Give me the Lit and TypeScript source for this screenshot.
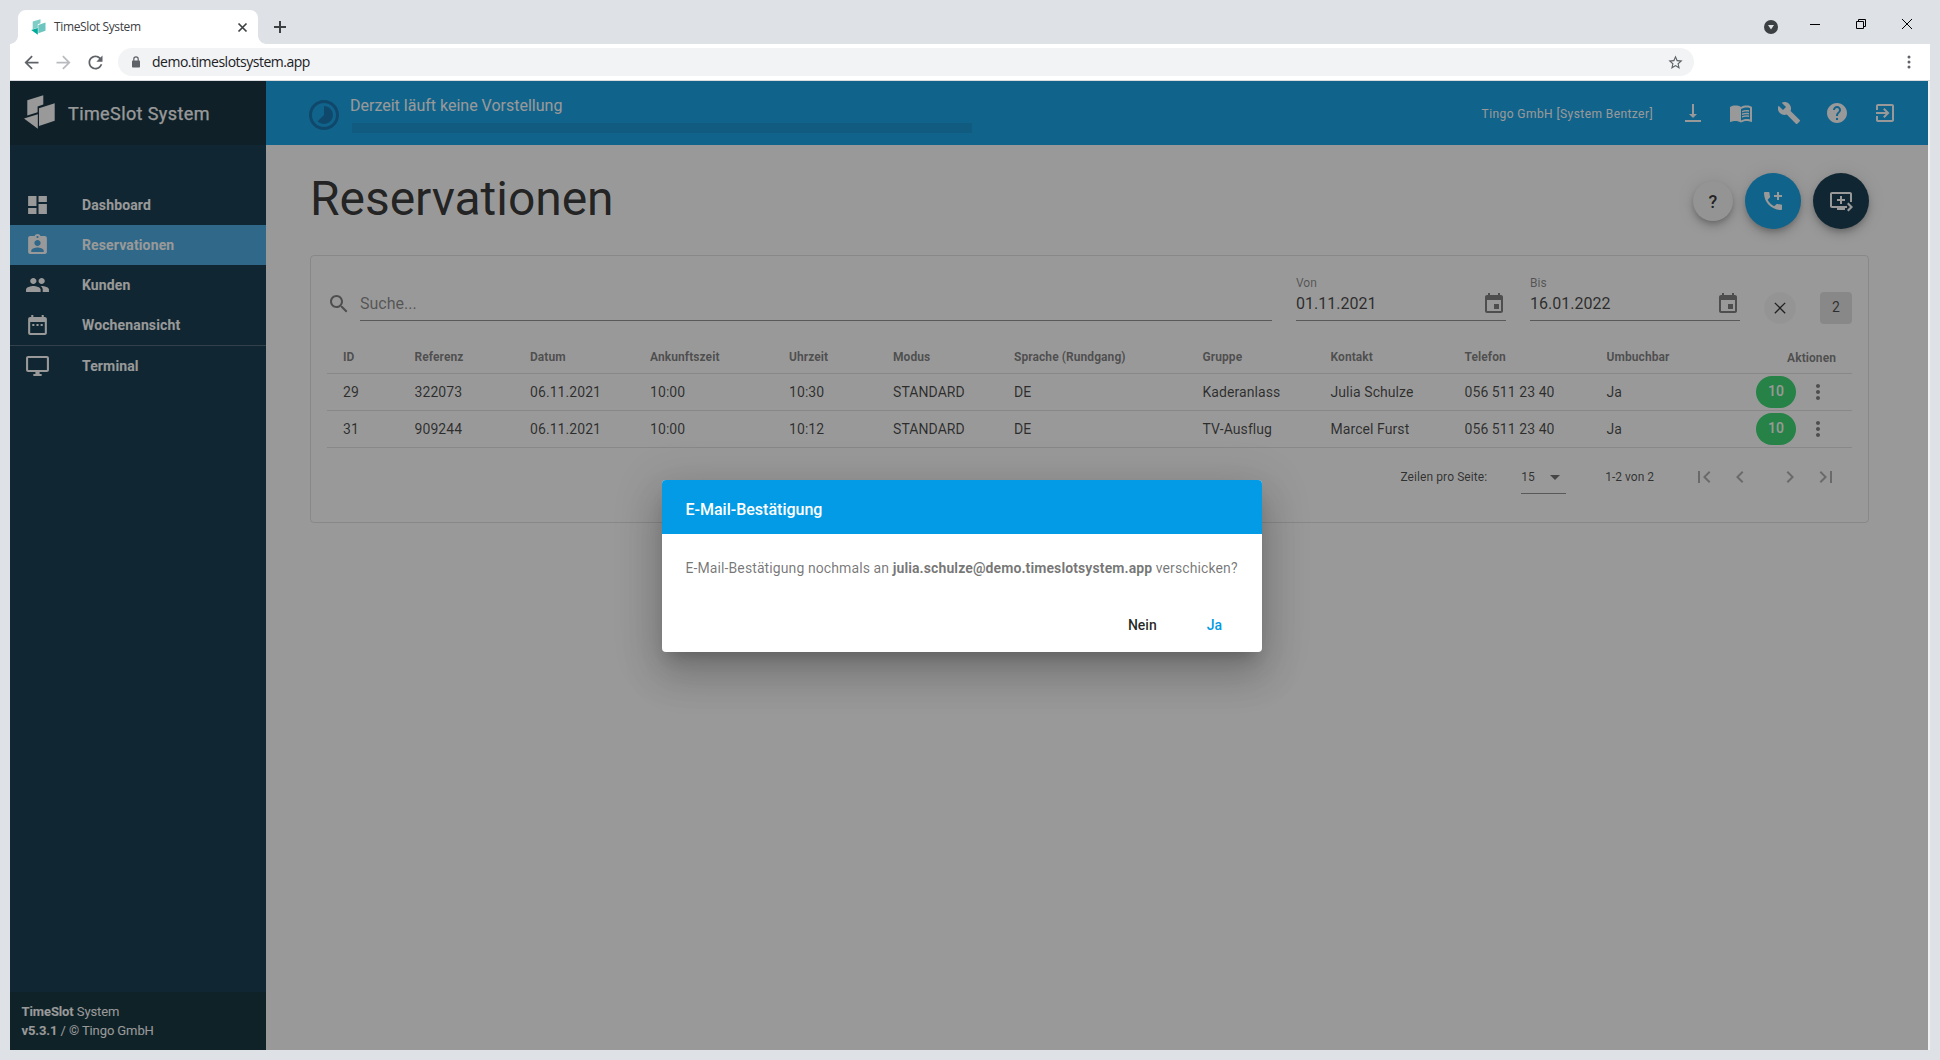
import { LitElement, html, css, svg } from "lit";
import { customElement, property } from "lit/decorators.js";

const ICONS: Record<string, string> = {
  dashboard: "M13 3v6h8V3m-8 18h8V11h-8M3 21h8v-6H3m0-2h8V3H3v10z",
  badge:
    "M19 3h-4.18C14.4 1.84 13.3 1 12 1s-2.4.84-2.82 2H5c-1.1 0-2 .9-2 2v14c0 1.1.9 2 2 2h14c1.1 0 2-.9 2-2V5c0-1.1-.9-2-2-2zm-7 0c.55 0 1 .45 1 1s-.45 1-1 1-1-.45-1-1 .45-1 1-1zm0 4c1.66 0 3 1.34 3 3s-1.34 3-3 3-3-1.34-3-3 1.34-3 3-3zm6 12H6v-1.4c0-2 4-3.1 6-3.1s6 1.1 6 3.1V19z",
  people:
    "M16 11c1.66 0 2.99-1.34 2.99-3S17.66 5 16 5s-3 1.34-3 3 1.34 3 3 3zm-8 0c1.66 0 2.99-1.34 2.99-3S9.66 5 8 5 5 6.340 5 8s1.340 3 3 3zm0 2c-2.330 0-7 1.170-7 3.500V19h14v-2.500c0-2.330-4.670-3.500-7-3.500zm8 0c-.290 0-.620.020-.970.050 1.160.840 1.970 1.970 1.970 3.450V19h6v-2.500c0-2.330-4.670-3.500-7-3.500z",
  week: "M9 11H7v2h2v-2zm4 0h-2v2h2v-2zm4 0h-2v2h2v-2zm2-7h-1V2h-2v2H8V2H6v2H5c-1.110 0-1.990.9-1.990 2L3 20c0 1.100.890 2 2 2h14c1.100 0 2-.9 2-2V6c0-1.100-.9-2-2-2zm0 16H5V9h14v11z",
  monitor:
    "M21 2H3c-1.100 0-2 .9-2 2v12c0 1.100.9 2 2 2h7v2H8v2h8v-2h-2v-2h7c1.100 0 2-.9 2-2V4c0-1.100-.9-2-2-2zm0 14H3V4h18v12z",
  timelapse:
    "M16.240 7.760C15.070 6.590 13.540 6 12 6v6l-4.240 4.240c2.340 2.340 6.140 2.340 8.490 0 2.340-2.340 2.340-6.140-.010-8.480zM12 2C6.480 2 2 6.480 2 12s4.480 10 10 10 10-4.480 10-10S17.520 2 12 2zm0 18c-4.420 0-8-3.580-8-8s3.580-8 8-8 8 3.580 8 8-3.580 8-8 8z",
  download: "M8 13h3V3h2v10h3l-4 4-4-4zM4 19v2h16v-2H4z",
  book: "M12 21.500c-1.350-.850-3.800-1.500-5.500-1.500-1.650 0-3.350.3-4.750 1.050-.1.050-.150.050-.250.050-.250 0-.5-.250-.5-.5V6c.6-.450 1.250-.750 2-1 1.110-.350 2.330-.5 3.500-.5 1.950 0 4.050.4 5.500 1.500 1.450-1.100 3.550-1.500 5.500-1.500 1.170 0 2.390.150 3.500.5.750.250 1.400.550 2 1v14.600c0 .250-.250.5-.5.5-.1 0-.150 0-.250-.050-1.400-.750-3.100-1.050-4.750-1.050-1.700 0-4.150.650-5.500 1.500M12 8v11.500c1.350-.850 3.800-1.500 5.500-1.500 1.200 0 2.400.150 3.500.5V7c-1.100-.350-2.300-.5-3.500-.5-1.700 0-4.150.650-5.500 1.500m1 3.500c1.110-.680 2.600-1 4.500-1 .910 0 1.760.090 2.500.280V9.230c-.870-.150-1.710-.230-2.500-.230-1.870 0-3.370.320-4.500.950v1.550m4.500.170c-1.710 0-3.210.260-4.500.790v1.690c1.110-.650 2.600-.990 4.500-.990 1.040 0 1.880.080 2.500.240v-1.500c-.870-.160-1.710-.230-2.500-.230m2.500 2.900c-.870-.160-1.710-.240-2.500-.240-1.830 0-3.330.270-4.500.8v1.690c1.110-.660 2.600-.990 4.500-.990 1.040 0 1.880.080 2.500.240v-1.500z",
  wrench:
    "M22.700 19l-9.100-9.100c.9-2.300.4-5-1.500-6.900-2-2-5-2.400-7.400-1.300L9 6 6 9 1.600 4.700C.4 7.100.9 10.100 2.900 12.100c1.900 1.900 4.600 2.400 6.900 1.500l9.100 9.100c.4.4 1 .4 1.400 0l2.300-2.300c.5-.4.5-1.100.1-1.400z",
  help: "M12 2C6.480 2 2 6.480 2 12s4.480 10 10 10 10-4.480 10-10S17.520 2 12 2zm1 17h-2v-2h2v2zm2.070-7.750l-.9.920C13.450 12.900 13 13.500 13 15h-2v-.5c0-1.100.450-2.100 1.170-2.830l1.240-1.260c.370-.360.590-.860.590-1.410 0-1.100-.9-2-2-2s-2 .9-2 2H8c0-2.210 1.790-4 4-4s4 1.790 4 4c0 .880-.360 1.680-.930 2.250z",
  exit: "M10.090 15.590L11.500 17l5-5-5-5-1.410 1.410L12.670 11H3v2h9.670l-2.580 2.590zM19 3H5c-1.110 0-2 .9-2 2v4h2V5h14v14H5v-4H3v4c0 1.100.890 2 2 2h14c1.100 0 2-.9 2-2V5c0-1.100-.9-2-2-2z",
  phonePlus:
    "M20 15.500c-1.250 0-2.450-.2-3.570-.57-.35-.11-.74-.03-1.020.24l-2.200 2.200c-2.830-1.440-5.150-3.750-6.590-6.590l2.200-2.200c.280-.280.360-.670.250-1.020C8.700 6.450 8.500 5.250 8.500 4c0-.550-.450-1-1-1H4c-.550 0-1 .450-1 1 0 9.390 7.610 17 17 17 .550 0 1-.450 1-1v-3.500c0-.550-.450-1-1-1zM21 6h-3V3h-2v3h-3v2h3v3h2V8h3V6z",
  queue:
    "M21 3H3c-1.110 0-2 .890-2 2v12c0 1.100.890 2 2 2h5v2h8v-2h2v-2H3V5h18v8h2V5c0-1.110-.9-2-2-2zm-8 7V7h-2v3H8v2h3v3h2v-3h3v-2h-3zm11 8l-4.500 4.500L18 21l3-3-3-3 1.500-1.500L24 18z",
  search:
    "M15.500 14h-.790l-.280-.270C15.410 12.590 16 11.110 16 9.500 16 5.910 13.090 3 9.500 3S3 5.910 3 9.500 5.910 16 9.500 16c1.610 0 3.090-.590 4.230-1.570l.270.280v.790l5 4.990L20.490 19l-4.990-5zm-6 0C7.010 14 5 11.990 5 9.500S7.010 5 9.500 5 14 7.010 14 9.500 11.990 14 9.500 14z",
  event:
    "M17 12h-5v5h5v-5zM16 1v2H8V1H6v2H5c-1.110 0-1.990.9-1.990 2L3 19c0 1.100.890 2 2 2h14c1.100 0 2-.9 2-2V5c0-1.100-.9-2-2-2h-1V1h-2zm3 18H5V8h14v11z",
  close: "M19.500 5.700l-1.200-1.200L12 10.800 5.700 4.500 4.500 5.700l6.300 6.300-6.300 6.300 1.200 1.200 6.300-6.300 6.300 6.300 1.200-1.200-6.300-6.300z",
  more: "M12 8c1.100 0 2-.9 2-2s-.9-2-2-2-2 .9-2 2 .9 2 2 2zm0 2c-1.100 0-2 .9-2 2s.9 2 2 2 2-.9 2-2-.9-2-2-2zm0 6c-1.100 0-2 .9-2 2s.9 2 2 2 2-.9 2-2-.9-2-2-2z",
  caret: "M7 10l5 5 5-5z",
  first: "M18.410 16.590L13.820 12l4.590-4.590L17 6l-6 6 6 6zM6 6h2v12H6z",
  prev: "M15.410 7.410L14 6l-6 6 6 6 1.410-1.410L10.830 12z",
  next: "M10 6L8.590 7.410 13.170 12l-4.580 4.590L10 18l6-6z",
  last: "M5.590 7.410L10.180 12l-4.590 4.590L7 18l6-6-6-6zM16 6h2v12h-2z",
  back: "M20 11H7.830l5.590-5.590L12 4l-8 8 8 8 1.410-1.410L7.830 13H20v-2z",
  forward: "M12 4l-1.410 1.410L16.170 11H4v2h12.170l-5.580 5.590L12 20l8-8z",
  reload:
    "M17.650 6.350C16.200 4.900 14.210 4 12 4c-4.420 0-7.990 3.580-7.990 8s3.570 8 7.990 8c3.730 0 6.840-2.550 7.730-6h-2.080c-.820 2.330-3.040 4-5.650 4-3.310 0-6-2.690-6-6s2.690-6 6-6c1.660 0 3.140.690 4.220 1.780L13 11h7V4l-2.350 2.350z",
  star: "M22 9.240l-7.190-.620L12 2 9.190 8.630 2 9.240l5.460 4.730L5.820 21 12 17.270 18.180 21l-1.630-7.030L22 9.240zM12 15.400l-3.760 2.270 1-4.280-3.320-2.880 4.380-.380L12 6.100l1.710 4.040 4.380.380-3.320 2.880 1 4.280L12 15.400z",
};

@customElement("ts-icon")
export class TsIcon extends LitElement {
  @property() name = "";
  static styles = css`
    :host {
      display: inline-flex;
      flex: none;
      width: 24px;
      height: 24px;
    }
    svg {
      width: 100%;
      height: 100%;
      fill: currentColor;
      display: block;
    }
  `;
  render() {
    return html`<svg viewBox="0 0 24 24" preserveAspectRatio="none">${svg`<path d=${ICONS[this.name] ?? ""} />`}</svg>`;
  }
}

@customElement("browser-chrome")
export class BrowserChrome extends LitElement {
  static styles = css`
    :host {
      display: flex;
      flex-direction: column;
      height: 81px;
      flex: none;
      font-family: "Open Sans", "Noto Sans", sans-serif;
      color: #3c4043;
    }
    .tabs {
      height: 44px;
      box-sizing: border-box;
      padding: 10px 12px 0 10px;
      display: flex;
      align-items: stretch;
    }
    .curve {
      width: 8px;
      align-self: flex-end;
      height: 8px;
    }
    .curve.l {
      background: radial-gradient(circle at 0 0, transparent 7.5px, #fff 8px);
    }
    .curve.r {
      background: radial-gradient(circle at 100% 0, transparent 7.5px, #fff 8px);
    }
    .tab {
      width: 240px;
      box-sizing: border-box;
      background: #fff;
      border-radius: 8px 8px 0 0;
      display: flex;
      align-items: center;
      padding: 0 9.500px 0 13px;
    }
    .fav {
      width: 16px;
      height: 16px;
      margin-right: 7px;
    }
    .title {
      flex: 1;
      font-size: 12px;
      letter-spacing: -0.36px;
      white-space: nowrap;
      padding-bottom: 1px;
    }
    .plus {
      width: 12px;
      height: 12px;
      margin: 11px 0 0 8px;
    }
    .spacer {
      flex: 1;
    }
    .win {
      display: flex;
      gap: 36px;
      padding-top: 8px;
      margin-right: 16px;
    }
    .win svg {
      display: block;
      fill: none;
      stroke: #000;
      stroke-width: 1;
    }
    .media {
      width: 14px;
      height: 14px;
      margin: 10px 32px 0 0;
    }
    .bar {
      height: 36px;
      margin: 0 10px;
      padding: 4px 0 4px 14px;
      box-sizing: border-box;
      background: #fff;
      display: flex;
      align-items: center;
      color: #5f6368;
    }
    .bar ts-icon {
      width: 21px;
      height: 21px;
      margin-right: 11px;
      position: relative;
      left: -3px;
    }
    .bar .dim {
      color: #b9bbbe;
    }
    .omni {
      width: 1576px;
      height: 28px;
      box-sizing: border-box;
      border-radius: 14px;
      background: #f1f3f4;
      display: flex;
      align-items: center;
      padding: 0 10px 0 14px;
      margin-left: -2px;
    }
    .lock {
      width: 8px;
      height: 12px;
      margin-right: 12px;
    }
    .url {
      flex: 1;
      font-size: 14px;
      color: #202124;
      letter-spacing: -0.49px;
      padding-bottom: 1px;
    }
    .omni .star {
      width: 17px;
      height: 17px;
      margin: 0;
      left: 0;
    }
    .dots {
      width: 4px;
      height: 14px;
      margin-left: auto;
      margin-right: 19.500px;
    }
    .line {
      height: 1px;
      margin: 0 10px;
      background: #dadce0;
    }
  `;
  render() {
    return html`
      <div class="tabs">
        <span class="curve l"></span>
        <div class="tab">
          <svg class="fav" viewBox="0 0 16 16">
            <path d="M1.700 2.500L9.500.3v4L6.800 5.300v3.400l-5.100 1.500z" fill="#7fcdc6" />
            <path d="M7.300 6L14.500 3.600v8.200l-7.200 2.400z" fill="#6cc5be" />
            <path d="M.2 11l6.600-2v6.800z" fill="#00a99a" />
          </svg>
          <span class="title">TimeSlot System</span>
          <svg width="13" height="13" viewBox="0 0 13 13">
            <path d="M2.500 2.500l8 8m0-8l-8 8" stroke="#3c4043" stroke-width="1.700" />
          </svg>
        </div>
        <span class="curve r"></span>
        <svg class="plus" viewBox="0 0 12 12"><path d="M6 0v12M0 6h12" stroke="#3c4043" stroke-width="2" /></svg>
        <span class="spacer"></span>
        <svg class="media" viewBox="0 0 14 14">
          <circle cx="7" cy="7" r="7" fill="#3c4043" />
          <path d="M4 5h6L7 9.500z" fill="#dee1e6" />
        </svg>
        <div class="win">
          <svg width="10" height="12" viewBox="0 0 10 12"><path d="M0 6.500h10" /></svg>
          <svg width="10" height="12" viewBox="0 0 10 12">
            <path d="M.5 3.500h7v7h-7zM2.500 3V1.500h7v7H8" />
          </svg>
          <svg width="10" height="12" viewBox="0 0 10 12"><path d="M0 1l10 10M10 1L0 11" /></svg>
        </div>
      </div>
      <div class="bar">
        <ts-icon name="back"></ts-icon>
        <ts-icon class="dim" name="forward"></ts-icon>
        <ts-icon name="reload"></ts-icon>
        <div class="omni">
          <svg class="lock" viewBox="0 0 8 12">
            <path d="M1.800 5V3a2.200 2.200 0 0 1 4.400 0v2" fill="none" stroke="#5f6368" stroke-width="1.200" />
            <rect y="4.500" width="8" height="7" rx=".8" fill="#5f6368" />
          </svg>
          <span class="url">demo.timeslotsystem.app</span>
          <ts-icon class="star" name="star"></ts-icon>
        </div>
        <svg class="dots" viewBox="0 0 4 14" fill="#5f6368">
          <circle cx="2" cy="2" r="1.500" /><circle cx="2" cy="7" r="1.500" /><circle cx="2" cy="12" r="1.500" />
        </svg>
      </div>
      <div class="line"></div>
    `;
  }
}

const NAV = [
  { icon: "dashboard", label: "Dashboard" },
  { icon: "badge", label: "Reservationen", active: true },
  { icon: "people", label: "Kunden" },
  { icon: "week", label: "Wochenansicht" },
  { icon: "monitor", label: "Terminal", divided: true },
];

@customElement("side-nav")
export class SideNav extends LitElement {
  static styles = css`
    :host {
      display: flex;
      flex-direction: column;
      width: 256px;
      flex: none;
      background: #032c42;
      color: #fff;
    }
    .brand {
      height: 64px;
      flex: none;
      background: #00212f;
      display: flex;
      align-items: center;
      padding-left: 13.500px;
      font-size: 18px;
      font-weight: 400;
    }
    .brand svg {
      width: 31px;
      height: 34px;
      margin: -2px 13.500px 0 0;
      fill: #fff;
    }
    .brand span {
      letter-spacing: 0.4px;
      -webkit-text-stroke: 0.25px currentColor;
    }
    nav {
      flex: 1;
      padding-top: 40px;
    }
    .item {
      height: 40px;
      display: flex;
      align-items: center;
      gap: 32px;
      padding-left: 15px;
      font-size: 14px;
      font-weight: 700;
      letter-spacing: 0.13px;
    }
    .item ts-icon {
      width: 25px;
    }
    .active {
      background: #3ba4e0;
    }
    .divided {
      border-top: 1px solid #415d6c;
    }
    .foot {
      height: 58px;
      box-sizing: border-box;
      padding: 10px 11.500px;
      background: #01242f;
      font-size: 13px;
      line-height: 19px;
      letter-spacing: -0.1px;
    }
  `;
  render() {
    return html`
      <div class="brand">
        <svg viewBox="0 0 31 34">
          <path d="M3.300 5.200L19.300.3v9.300l-5.700 1.900v5.800L3.300 20.400z" />
          <path d="M15 13.200L30.700 8.200v17.600L15 30.900z" />
          <path d="M0 23.400l13.800-4.200V33.800z" />
        </svg>
        <span>TimeSlot System</span>
      </div>
      <nav>
        ${NAV.map(
          (n) => html`<div class="item ${n.active ? "active" : ""} ${n.divided ? "divided" : ""}">
            <ts-icon name=${n.icon}></ts-icon><span>${n.label}</span>
          </div>`
        )}
      </nav>
      <div class="foot">
        <div><b>TimeSlot</b> System</div>
        <div><b>v5.3.1</b> / © Tingo GmbH</div>
      </div>
    `;
  }
}

@customElement("top-bar")
export class TopBar extends LitElement {
  static styles = css`
    :host {
      display: flex;
      align-items: center;
      height: 64px;
      flex: none;
      background: #039be5;
      color: #fff;
      padding: 0 31px 0 40px;
      box-sizing: border-box;
    }
    .lapse {
      width: 36px;
      height: 36px;
      margin-top: 4px;
      color: #0069a8;
    }
    .show {
      margin-left: 8px;
      width: 622px;
      font-size: 16px;
      line-height: 20px;
      padding-top: 3px;
    }
    .track {
      height: 10px;
      margin: 7px 0 0 2px;
      background: #038cd0;
    }
    .user {
      margin-left: auto;
      font-size: 12px;
      margin-right: 28px;
      padding-top: 1px;
      letter-spacing: 0.42px;
    }
    .icons {
      display: flex;
      gap: 24px;
    }
  `;
  render() {
    return html`
      <ts-icon class="lapse" name="timelapse"></ts-icon>
      <div class="show">
        Derzeit läuft keine Vorstellung
        <div class="track"></div>
      </div>
      <span class="user">Tingo GmbH [System Bentzer]</span>
      <div class="icons">
        ${["download", "book", "wrench", "help", "exit"].map((i) => html`<ts-icon name=${i}></ts-icon>`)}
      </div>
    `;
  }
}

const COLUMNS = [
  "ID", "Referenz", "Datum", "Ankunftszeit", "Uhrzeit", "Modus",
  "Sprache (Rundgang)", "Gruppe", "Kontakt", "Telefon", "Umbuchbar",
];
const ROWS = [
  ["29", "322073", "06.11.2021", "10:00", "10:30", "STANDARD", "DE", "Kaderanlass", "Julia Schulze", "056 511 23 40", "Ja"],
  ["31", "909244", "06.11.2021", "10:00", "10:12", "STANDARD", "DE", "TV-Ausflug", "Marcel Furst", "056 511 23 40", "Ja"],
];

@customElement("reservation-page")
export class ReservationPage extends LitElement {
  static styles = css`
    :host {
      display: block;
      flex: 1;
      padding: 28px 59px 0 44px;
    }
    .head {
      display: flex;
      align-items: center;
      height: 56px;
    }
    h1 {
      flex: 1;
      margin: -5px 0 0;
      font-size: 48px;
      font-weight: 400;
      line-height: 56px;
      letter-spacing: -0.05px;
      color: rgba(0, 0, 0, 0.87);
    }
    .fab {
      width: 56px;
      height: 56px;
      border-radius: 50%;
      display: flex;
      align-items: center;
      justify-content: center;
      color: #fff;
      margin-left: 12px;
      background: #039be5;
      box-shadow: 0 3px 5px -1px rgba(0, 0, 0, 0.2), 0 6px 10px 0 rgba(0, 0, 0, 0.14), 0 1px 18px 0 rgba(0, 0, 0, 0.12);
    }
    .fab.small {
      width: 40px;
      height: 40px;
      margin: 0;
      background: #f5f5f5;
      color: rgba(0, 0, 0, 0.87);
      font-size: 18px;
      font-weight: 500;
    }
    .fab.dark {
      background: #032c42;
    }
    .card {
      margin-top: 26px;
      height: 268px;
      box-sizing: border-box;
      border: 1px solid rgba(0, 0, 0, 0.12);
      border-radius: 4px;
      padding: 16px;
    }
    .filters {
      display: flex;
      height: 49px;
      align-items: flex-end;
    }
    .muted {
      color: rgba(0, 0, 0, 0.54);
    }
    .glass {
      margin: 0 9px 5px 0;
    }
    .field {
      height: 34px;
      box-sizing: border-box;
      border-bottom: 1px solid rgba(0, 0, 0, 0.46);
      font-size: 16px;
      line-height: 34px;
    }
    .search {
      flex: 1;
      color: rgba(0, 0, 0, 0.5);
    }
    .date {
      width: 210px;
      height: 50px;
      margin-left: 24px;
      display: grid;
      grid-template-columns: 1fr 24px;
      grid-template-rows: 18px 1fr;
      color: rgba(0, 0, 0, 0.8);
    }
    .date span {
      line-height: 30px;
    }
    .date small {
      grid-column: 1 / 3;
      font-size: 12px;
      line-height: 24px;
      color: rgba(0, 0, 0, 0.5);
    }
    .date ts-icon {
      margin-top: 3px;
    }
    .clear,
    .count {
      width: 32px;
      height: 32px;
      margin: 0 0 -3px 24px;
      display: flex;
      align-items: center;
      justify-content: center;
      border-radius: 50%;
    }
    .clear {
      background: rgba(0, 0, 0, 0.035);
    }
    .clear ts-icon {
      width: 18px;
      height: 18px;
      color: rgba(0, 0, 0, 0.87);
    }
    .count {
      border-radius: 4px;
      background: #e0e0e0;
      font-size: 14px;
      line-height: 30px;
      align-items: flex-start;
      color: rgba(0, 0, 0, 0.75);
    }
    .row {
      display: grid;
      grid-template-columns: 71.500px 115.500px 120px 139px 104px 121px 188.500px 128px 134px 142px 1fr;
      height: 37px;
      box-sizing: border-box;
      border-bottom: 1px solid rgba(0, 0, 0, 0.12);
      align-items: center;
      padding-left: 16px;
      font-size: 14px;
      letter-spacing: 0.07px;
      color: rgba(0, 0, 0, 0.78);
    }
    .row.th {
      margin-top: 16px;
      font-size: 12px;
      font-weight: 700;
      color: rgba(0, 0, 0, 0.55);
      padding-top: 3px;
    }
    .last {
      display: flex;
      justify-content: space-between;
      align-items: center;
      height: 100%;
      padding-right: 16px;
    }
    .th .last span + span {
      padding-top: 2px;
    }
    .actions {
      display: flex;
      align-items: center;
      gap: 10px;
      padding-right: 6px;
    }
    .pill {
      width: 40px;
      height: 32px;
      border-radius: 16px;
      background: #2bd566;
      color: #fff;
      font-weight: 500;
      line-height: 31px;
      text-align: center;
    }
    .pager {
      display: flex;
      align-items: center;
      font-size: 12px;
      height: 58px;
      color: rgba(0, 0, 0, 0.76);
      padding-right: 14px;
      justify-content: flex-end;
    }
    .size {
      width: 45px;
      height: 34px;
      box-sizing: border-box;
      border-bottom: 1px solid rgba(0, 0, 0, 0.46);
      display: flex;
      align-items: center;
      justify-content: space-between;
      margin: 0 39px 0 34px;
    }
    .size ts-icon {
      color: rgba(0, 0, 0, 0.6);
      margin-right: -1px;
    }
    .label {
      letter-spacing: 0.09px;
    }
    .pg {
      color: rgba(0, 0, 0, 0.34);
      margin-left: 12px;
    }
    .pg.start {
      margin-left: 38px;
    }
    .pg.gap {
      margin-left: 26px;
    }
  `;
  render() {
    return html`
      <div class="head">
        <h1>Reservationen</h1>
        <div class="fab small">?</div>
        <div class="fab"><ts-icon name="phonePlus"></ts-icon></div>
        <div class="fab dark"><ts-icon name="queue"></ts-icon></div>
      </div>
      <div class="card">
        <div class="filters">
          <ts-icon class="glass muted" name="search"></ts-icon>
          <div class="field search">Suche...</div>
          <div class="field date">
            <small>Von</small><span>01.11.2021</span><ts-icon class="muted" name="event"></ts-icon>
          </div>
          <div class="field date">
            <small>Bis</small><span>16.01.2022</span><ts-icon class="muted" name="event"></ts-icon>
          </div>
          <div class="clear"><ts-icon name="close"></ts-icon></div>
          <div class="count">2</div>
        </div>
        <div class="row th">
          ${COLUMNS.map((c, i) =>
            i < 10 ? html`<span>${c}</span>` : html`<span class="last"><span>${c}</span><span>Aktionen</span></span>`
          )}
        </div>
        ${ROWS.map(
          (r) => html`<div class="row">
            ${r.map((c, i) =>
              i < 10
                ? html`<span>${c}</span>`
                : html`<span class="last"
                    ><span>${c}</span
                    ><span class="actions"><span class="pill">10</span><ts-icon class="muted" name="more"></ts-icon></span
                  ></span>`
            )}
          </div>`
        )}
        <div class="pager">
          <span class="label">Zeilen pro Seite:</span>
          <div class="size"><span>15</span><ts-icon name="caret"></ts-icon></div>
          <span>1-2 von 2</span>
          <ts-icon class="pg start" name="first"></ts-icon>
          <ts-icon class="pg" name="prev"></ts-icon>
          <ts-icon class="pg gap" name="next"></ts-icon>
          <ts-icon class="pg" name="last"></ts-icon>
        </div>
      </div>
    `;
  }
}

@customElement("confirm-dialog")
export class ConfirmDialog extends LitElement {
  static styles = css`
    :host {
      position: absolute;
      inset: 0;
      background: rgba(33, 33, 33, 0.46);
      display: flex;
      justify-content: center;
      align-items: center;
    }
    .box {
      width: 600px;
      height: 172px;
      margin: 0 14px 0 0;
      border-radius: 4px;
      overflow: hidden;
      background: #fff;
      display: flex;
      flex-direction: column;
      box-shadow: 0 11px 15px -7px rgba(0, 0, 0, 0.2), 0 24px 38px 3px rgba(0, 0, 0, 0.14), 0 9px 46px 8px rgba(0, 0, 0, 0.12);
    }
    .head {
      height: 54px;
      box-sizing: border-box;
      background: #039be5;
      color: #fff;
      padding: 5px 23.500px 0;
      font-size: 16px;
      font-weight: 500;
      line-height: 50px;
    }
    .body {
      padding: 23px 23.500px 0;
      font-size: 14px;
      line-height: 22px;
      letter-spacing: 0.1px;
      color: rgba(0, 0, 0, 0.55);
      white-space: nowrap;
      flex: 1;
    }
    .btns {
      display: flex;
      justify-content: flex-end;
      gap: 50px;
      padding: 0 40px 0 0;
      height: 53px;
      line-height: 52px;
      font-size: 14px;
      font-weight: 500;
      color: rgba(0, 0, 0, 0.85);
    }
    .yes {
      color: #039be5;
    }
  `;
  render() {
    return html`<div class="box">
      <div class="head">E-Mail-Bestätigung</div>
      <div class="body">E-Mail-Bestätigung nochmals an <b>julia.schulze@demo.timeslotsystem.app</b> verschicken?</div>
      <div class="btns"><span>Nein</span><span class="yes">Ja</span></div>
    </div>`;
  }
}

@customElement("app-root")
export class AppRoot extends LitElement {
  static styles = css`
    :host {
      display: flex;
      flex-direction: column;
      width: 1940px;
      height: 1060px;
      box-sizing: border-box;
      padding-bottom: 10px;
      background: #dee1e6;
      overflow: hidden;
      font-family: Roboto, "Liberation Sans", sans-serif;
    }
    .frame {
      flex: 1;
      margin: 0 10px;
      padding-right: 2px;
      background: #f1f1f1;
      display: flex;
      min-height: 0;
    }
    .app {
      flex: 1;
      display: flex;
      position: relative;
      background: #fff;
      overflow: hidden;
    }
    .main {
      flex: 1;
      display: flex;
      flex-direction: column;
    }
  `;
  render() {
    return html`
      <browser-chrome></browser-chrome>
      <div class="frame">
        <div class="app">
          <side-nav></side-nav>
          <div class="main">
            <top-bar></top-bar>
            <reservation-page></reservation-page>
          </div>
          <confirm-dialog></confirm-dialog>
        </div>
      </div>
    `;
  }
}
